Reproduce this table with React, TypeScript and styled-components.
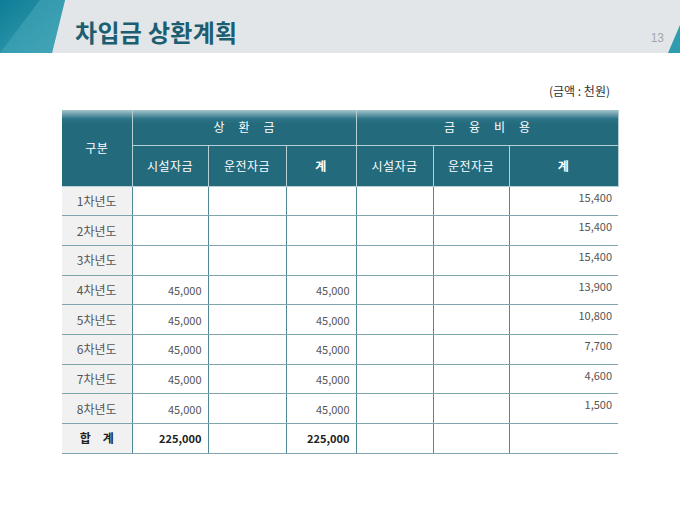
import styled, { createGlobalStyle } from 'styled-components'

const GlobalStyle = createGlobalStyle`
  html, body {
    margin: 0;
    padding: 0;
    background: #ffffff;
  }
  body {
    font-family: 'Noto Sans CJK KR', 'Noto Sans', sans-serif;
  }
`

const Slide = styled.div`
  width: 680px;
  height: 510px;
  background: #ffffff;
  overflow: hidden;
`

const TitleBar = styled.header`
  display: flex;
  align-items: stretch;
  height: 53px;
  background: #e3e6e8;
`

const Title = styled.h1`
  margin: 0 0 0 10px;
  align-self: center;
  padding-top: 10px;
  font-size: 24px;
  line-height: 28px;
  font-weight: 700;
  letter-spacing: 0.3px;
  color: #1c5e71;
`

const PageNo = styled.span`
  margin-left: auto;
  margin-right: 4px;
  align-self: center;
  padding-top: 22px;
  font-family: 'Liberation Sans', sans-serif;
  font-size: 12px;
  color: #a3a7aa;
`

const Content = styled.main`
  padding: 30px 0 0 62px;
  width: 556px;
`

const Unit = styled.div`
  text-align: right;
  padding-right: 8px;
  height: 27px;
  font-size: 12px;
  line-height: 16px;
  color: #333;
`

const Table = styled.table`
  width: 556px;
  border-collapse: collapse;
  table-layout: fixed;
  font-size: 11px;
  line-height: 14px;
`

const Tr = styled.tr<{ $h: number }>`
  height: ${({ $h }) => $h}px;
`

const Th = styled.th<{ $bold?: boolean; $spaced?: boolean }>`
  padding: 0;
  background: linear-gradient(to bottom, #a5c5cd 0px, #2b7386 9px, #236a7c 14px, #236a7c 100%);
  color: #ffffff;
  font-size: 12px;
  font-weight: ${({ $bold }) => ($bold ? 700 : 400)};
  letter-spacing: ${({ $spaced }) => ($spaced ? '14px' : '0.5px')};
  text-indent: ${({ $spaced }) => ($spaced ? '14px' : '0')};
  border-left: 1px solid #b7d0d6;
  border-right: 1px solid #b7d0d6;
  border-bottom: 1px solid #b7d0d6;
  &:first-child {
    border-left: none;
  }
`

const SubTh = styled(Th)`
  background: #236a7c;
`

const Td = styled.td<{ $top?: boolean; $bold?: boolean }>`
  padding: ${({ $top }) => ($top ? '3px 6px 0 0' : '0 6px 0 0')};
  vertical-align: ${({ $top }) => ($top ? 'top' : 'middle')};
  text-align: right;
  color: ${({ $bold }) => ($bold ? '#222' : '#555')};
  font-weight: ${({ $bold }) => ($bold ? 700 : 400)};
  border: 1px solid #4f8896;
  border-top-color: #7ea4ae;
  border-bottom-color: #7ea4ae;
  &:last-child {
    border-right: none;
  }
`

const Label = styled(Td)`
  padding: 0;
  text-align: center;
  font-size: 12px;
  background: #f1f1f1;
  border-left: none;
  letter-spacing: ${({ $bold }) => ($bold ? '12px' : '0')};
  text-indent: ${({ $bold }) => ($bold ? '12px' : '0')};
`

const LeftDeco = () => (
  <svg width="65" height="53" viewBox="0 0 65 53">
    <defs>
      <linearGradient id="lg" x1="0" y1="0" x2="1" y2="1">
        <stop offset="0" stopColor="#0d7d96" />
        <stop offset="1" stopColor="#3ea3b5" />
      </linearGradient>
    </defs>
    <polygon points="0,0 65,0 52,53 0,53" fill="url(#lg)" />
    <polygon points="0,53 52,53 65,0 40,0" fill="#48a8b9" opacity="0.55" />
  </svg>
)

const RightDeco = () => (
  <svg width="12" height="53" viewBox="0 0 12 53">
    <polygon points="0,53 12,25 12,53" fill="#2e9bb0" />
  </svg>
)

type Row = { label: string; a?: string; c?: string; f?: string }

const rows: Row[] = [
  { label: '1차년도', f: '15,400' },
  { label: '2차년도', f: '15,400' },
  { label: '3차년도', f: '15,400' },
  { label: '4차년도', a: '45,000', c: '45,000', f: '13,900' },
  { label: '5차년도', a: '45,000', c: '45,000', f: '10,800' },
  { label: '6차년도', a: '45,000', c: '45,000', f: '7,700' },
  { label: '7차년도', a: '45,000', c: '45,000', f: '4,600' },
  { label: '8차년도', a: '45,000', c: '45,000', f: '1,500' },
]

const widths = [70, 76, 78, 70, 77, 76, 109]

export default function App() {
  return (
    <Slide>
      <GlobalStyle />
      <TitleBar>
        <LeftDeco />
        <Title>차입금 상환계획</Title>
        <PageNo>13</PageNo>
        <RightDeco />
      </TitleBar>
      <Content>
        <Unit>(금액 : 천원)</Unit>
        <Table>
          <colgroup>
            {widths.map((w, i) => (
              <col key={i} style={{ width: w }} />
            ))}
          </colgroup>
          <thead>
            <Tr $h={35}>
              <Th rowSpan={2}>구분</Th>
              <Th colSpan={3} $spaced>상환금</Th>
              <Th colSpan={3} $spaced>금융비용</Th>
            </Tr>
            <Tr $h={41}>
              <SubTh>시설자금</SubTh>
              <SubTh>운전자금</SubTh>
              <SubTh $bold>계</SubTh>
              <SubTh>시설자금</SubTh>
              <SubTh>운전자금</SubTh>
              <SubTh $bold>계</SubTh>
            </Tr>
          </thead>
          <tbody>
            {rows.map((r) => (
              <Tr $h={29.7} key={r.label}>
                <Label>{r.label}</Label>
                <Td>{r.a}</Td>
                <Td />
                <Td>{r.c}</Td>
                <Td />
                <Td />
                <Td $top>{r.f}</Td>
              </Tr>
            ))}
            <Tr $h={29.7}>
              <Label $bold>합계</Label>
              <Td $bold>225,000</Td>
              <Td />
              <Td $bold>225,000</Td>
              <Td />
              <Td />
              <Td />
            </Tr>
          </tbody>
        </Table>
      </Content>
    </Slide>
  )
}
